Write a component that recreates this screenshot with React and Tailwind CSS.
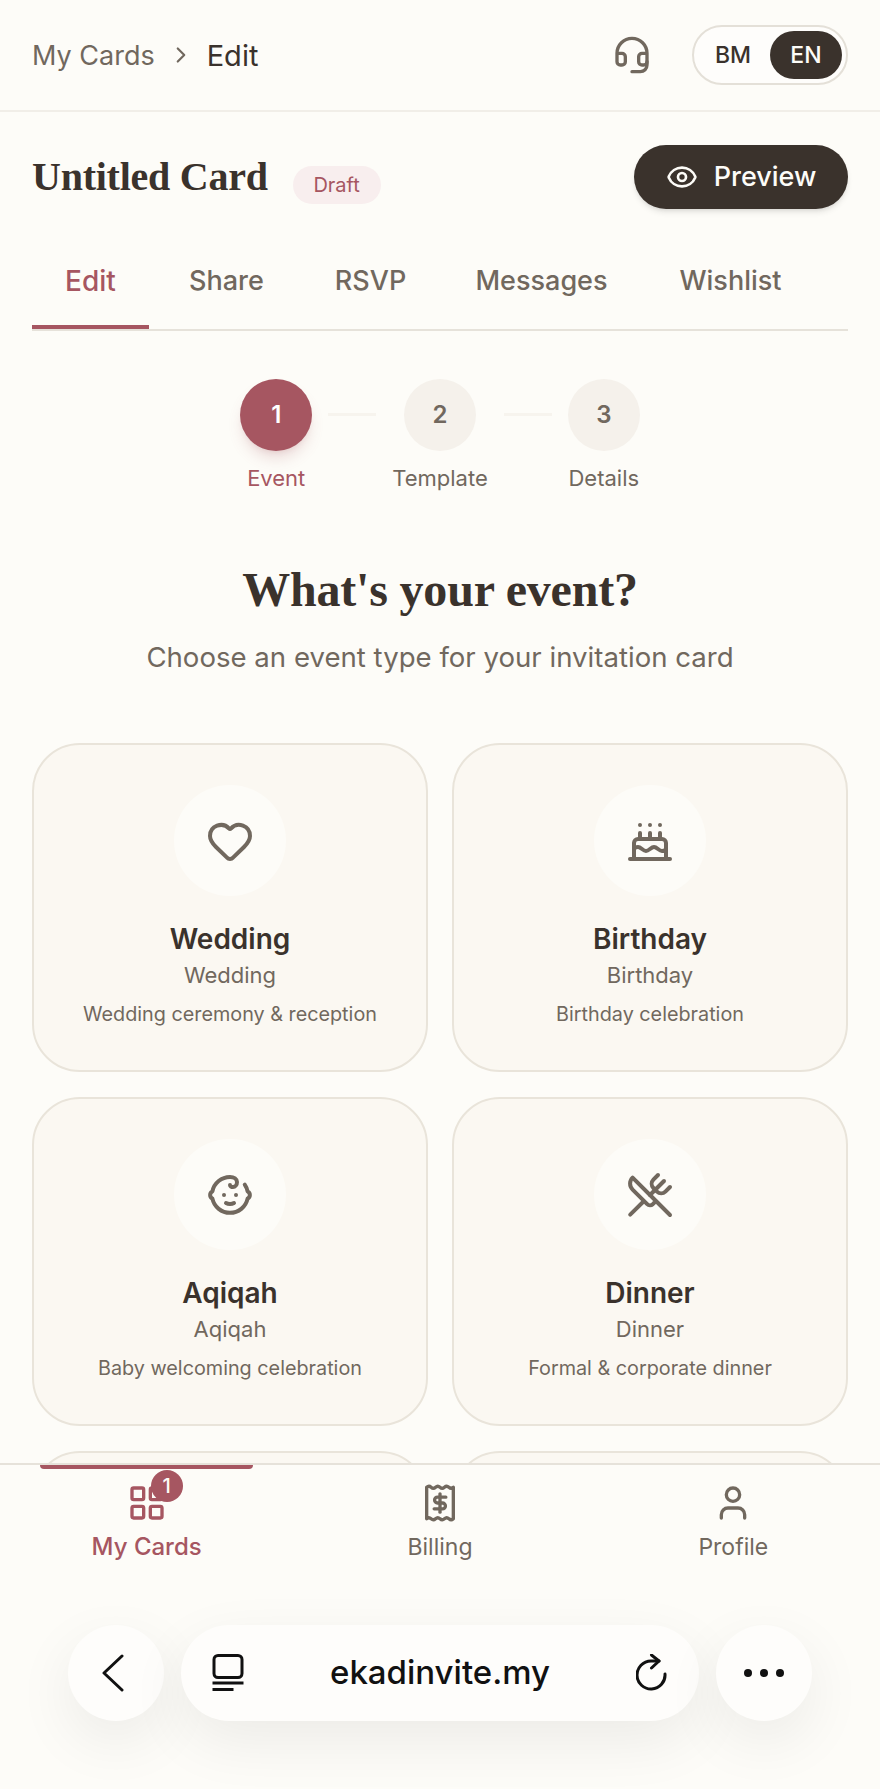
import React from 'react';
import { Baby, Cake, ChevronRight, Eye, Headset, Heart, LayoutGrid, User, UtensilsCrossed } from 'lucide-react';

const tabs = [
  { label: 'Edit', width: 'w-[117px]' },
  { label: 'Share', width: 'w-[139px]' },
  { label: 'RSVP', width: 'w-[133px]' },
  { label: 'Messages', width: 'w-[193px]' },
  { label: 'Wishlist', width: 'w-[169px]' },
];

const steps = [
  { num: 1, label: 'Event', active: true },
  { num: 2, label: 'Template' },
  { num: 3, label: 'Details' },
];

const events = [
  { title: 'Wedding', sub: 'Wedding', desc: 'Wedding ceremony & reception', Icon: Heart },
  { title: 'Birthday', sub: 'Birthday', desc: 'Birthday celebration', Icon: Cake },
  { title: 'Aqiqah', sub: 'Aqiqah', desc: 'Baby welcoming celebration', Icon: Baby },
  { title: 'Dinner', sub: 'Dinner', desc: 'Formal & corporate dinner', Icon: UtensilsCrossed },
];

const BillingIcon = () => (
  <svg width="40" height="40" viewBox="0 0 24 24" fill="none" stroke="currentColor" strokeWidth="2" strokeLinecap="round" strokeLinejoin="round">
    <path d="M4 2.5v19q1.33 -1.2 2.67 0t2.67 0t2.66 0t2.67 0t2.67 0t2.66 0v-19q-1.33 1.2 -2.66 0t-2.67 0t-2.67 0t-2.66 0t-2.67 0t-2.67 0Z" />
    <path d="M15.5 8.5h-5a1.75 1.75 0 0 0 0 3.5h3a1.75 1.75 0 0 1 0 3.5h-5" />
    <path d="M12 6.5v11" />
  </svg>
);

const BackIcon = () => (
  <svg width="24" height="38" viewBox="0 0 24 38" fill="none" stroke="#111111" strokeWidth="3" strokeLinecap="round" strokeLinejoin="round">
    <path d="M21 2L3 19l18 17" />
  </svg>
);

const TabsIcon = () => (
  <svg width="32" height="38" viewBox="0 0 32 38" fill="none" stroke="#111111" strokeWidth="3">
    <rect x="2" y="1.5" width="28" height="22" rx="4" />
    <path d="M0.5 29h31" />
    <path d="M0.5 35.5h21" />
  </svg>
);

const ReloadIcon = () => (
  <svg width="32" height="38" viewBox="0 0 32 38" fill="none" stroke="#111111" strokeWidth="3" strokeLinecap="round" strokeLinejoin="round">
    <path d="M29 20A14 14 0 1 1 15 7h8" />
    <path d="M15.5 1L23 7l-7.5 7" />
  </svg>
);

const App = () => {
  return (
    <div className="relative h-[1789px] w-[880px] overflow-hidden bg-[#fdfcf8] font-['Inter',sans-serif] text-[#3a322c]">
      <header className="flex h-[112px] items-center justify-between border-b-2 border-[#f1eee8] pl-8 pr-8">
        <div className="flex items-center text-[27px] leading-none">
          <span className="text-[#71685e]">My Cards</span>
          <ChevronRight size={26} strokeWidth={2} className="mx-[13px] text-[#71685e]" />
          <span className="text-[29px]">Edit</span>
        </div>
        <div className="flex items-center gap-[40px]">
          <Headset size={40} strokeWidth={2} className="text-[#71685e]" />
          <div className="flex h-[60px] w-[156px] items-center justify-between rounded-full border-2 border-[#e4e0d8] bg-[#fefdfb] pl-[21px] pr-[4px] text-[23px] font-medium">
            <span>BM</span>
            <span className="flex h-[48px] w-[72px] items-center justify-center rounded-full bg-[#3a322c] text-[#fdfcf8]">EN</span>
          </div>
        </div>
      </header>

      <div className="px-8">
        <div className="flex items-center justify-between pt-[33px]">
          <div className="flex items-center">
            <h1 className="font-['Liberation_Serif',serif] text-[40px] font-bold leading-none tracking-[-0.25px]">Untitled Card</h1>
            <span className="ml-[25px] mt-4 flex h-[38px] w-[88px] items-center justify-center rounded-full bg-[#f8eeee] text-[20px] text-[#a65661]">Draft</span>
          </div>
          <button className="flex h-[64px] w-[214px] items-center justify-center gap-[16px] rounded-full bg-[#3a322c] text-[27px] font-medium text-[#fdfcf8] shadow-md">
            <Eye size={32} strokeWidth={2} />
            Preview
          </button>
        </div>

        <div className="mt-6 flex gap-2 border-b-2 border-[#e6e2da]">
          {tabs.map((tab, i) => (
            <div
              key={tab.label}
              className={i === 0
                ? `flex h-[96px] items-center justify-center border-b-4 border-[#a65661] pt-[4px] text-[28px] font-medium text-[#a65661] ${tab.width}`
                : `flex h-[96px] items-center justify-center border-b-4 border-transparent pt-[4px] text-[27px] font-medium text-[#71685e] ${tab.width}`}
            >
              {tab.label}
            </div>
          ))}
        </div>

        <div className="mt-[48px] flex items-start justify-center gap-4">
          {steps.map((step, i) => (
            <React.Fragment key={step.num}>
              {i > 0 && <div className="mt-[34px] h-[3px] w-12 bg-[#f7f4ee]" />}
              <div className="flex min-w-[72px] flex-col items-center">
                <div className={step.active
                  ? 'flex h-[72px] w-[72px] items-center justify-center rounded-full bg-[#a65661] text-[24px] font-semibold text-white shadow-lg shadow-[#a6566133]'
                  : 'flex h-[72px] w-[72px] items-center justify-center rounded-full bg-[#f5f1eb] text-[24px] font-semibold text-[#71685e]'}
                >
                  {step.num}
                </div>
                <span className={step.active ? 'mt-[11px] text-[22px] leading-8 text-[#a65661]' : 'mt-[11px] text-[22px] leading-8 text-[#71685e]'}>
                  {step.label}
                </span>
              </div>
            </React.Fragment>
          ))}
        </div>

        <h2 className="mt-[64px] text-center font-['Liberation_Serif',serif] text-[48px] font-bold leading-[64px] tracking-[-0.2px]">What's your event?</h2>
        <p className="mt-[15px] text-center text-[27.6px] leading-10 text-[#71685e]">Choose an event type for your invitation card</p>

        <div className="mt-[66px] grid grid-cols-2 gap-x-6 gap-y-[25px]">
          {events.map(({ title, sub, desc, Icon }) => (
            <div key={title} className="flex h-[329px] flex-col items-center rounded-[48px] border-2 border-[#e9e4da] bg-[#fbf8f2] pt-[40px]">
              <div className="flex h-[111px] w-[112px] items-center justify-center rounded-full bg-[#fdfcf8]">
                <Icon size={48} strokeWidth={2} className="text-[#71685e]" />
              </div>
              <div className="mt-[23px] text-[28px] font-semibold leading-10">{title}</div>
              <div className="text-[22px] leading-8 text-[#71685e]">{sub}</div>
              <div className="mt-[8px] text-[19.8px] leading-[30px] text-[#71685e]">{desc}</div>
            </div>
          ))}
          <div className="h-[329px] rounded-[48px] border-2 border-[#e9e4da] bg-[#fbf8f2]" />
          <div className="h-[329px] rounded-[48px] border-2 border-[#e9e4da] bg-[#fbf8f2]" />
        </div>
      </div>

      <nav className="absolute inset-x-0 bottom-0 flex h-[326px] items-start border-t-2 border-[#e6e2da] bg-[#fdfcf8]">
        <div className="relative flex flex-1 flex-col items-center pt-[18px] text-[#a65661]">
          <div className="absolute left-[40px] top-0 h-[4px] w-[213px] rounded-b-full bg-[#a65661]" />
          <div className="relative">
            <LayoutGrid size={40} strokeWidth={2} />
            <span className="absolute -right-[16px] -top-[13px] flex h-8 w-8 items-center justify-center rounded-full bg-[#a65661] text-[20px] font-medium text-[#fdfcf8]">1</span>
          </div>
          <span className="mt-[8px] text-[24px] font-medium leading-8">My Cards</span>
        </div>
        <div className="flex flex-1 flex-col items-center pt-[18px] text-[#71685e]">
          <BillingIcon />
          <span className="mt-[8px] text-[23px] leading-8">Billing</span>
        </div>
        <div className="flex flex-1 flex-col items-center pt-[18px] text-[#71685e]">
          <User size={40} strokeWidth={2} />
          <span className="mt-[8px] text-[23px] leading-8">Profile</span>
        </div>
      </nav>

      <div className="absolute inset-x-0 bottom-[68px] flex gap-[17px] px-[68px]">
        <div className="flex h-[96px] w-[96px] items-center justify-center rounded-full bg-[#fefdfb] pr-[6px] shadow-[0_20px_60px_rgba(0,0,0,0.07)]">
          <BackIcon />
        </div>
        <div className="flex h-[96px] flex-1 items-center justify-between rounded-full bg-[#fefdfb] pl-[31px] pr-[31px] shadow-[0_20px_60px_rgba(0,0,0,0.07)]">
          <TabsIcon />
          <span className="text-[33px] font-medium text-[#111111]">ekadinvite.my</span>
          <ReloadIcon />
        </div>
        <div className="flex h-[96px] w-[96px] items-center justify-center gap-[8px] rounded-full bg-[#fefdfb] shadow-[0_20px_60px_rgba(0,0,0,0.07)]">
          <span className="h-2 w-2 rounded-full bg-[#111111]" />
          <span className="h-2 w-2 rounded-full bg-[#111111]" />
          <span className="h-2 w-2 rounded-full bg-[#111111]" />
        </div>
      </div>
    </div>
  );
};

export default App;
